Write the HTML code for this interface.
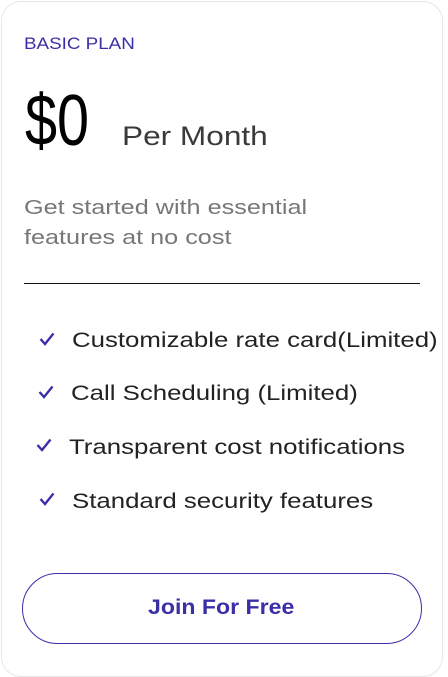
<!DOCTYPE html>
<html><head><style>
body{margin:0;width:448px;height:677px;background:#fff;font-family:"Liberation Sans",sans-serif;position:relative;overflow:hidden}
.card{position:absolute;left:1px;top:1px;width:440px;height:674px;border:1px solid #e6e6e6;border-radius:20px}
.a{position:absolute;white-space:nowrap;transform-origin:left center}
.f{font-size:21.5px;color:#222;transform:scaleX(1.2)}
.ck{position:absolute;width:16px;height:14px}
</style></head><body>
<div class="card"></div>
<div class="a" style="left:24px;top:35px;font-size:16.5px;color:#3a2fa6;transform:scaleX(1.14)">BASIC PLAN</div>
<div class="a" style="left:25px;top:80px;font-size:72px;color:#000;transform:scaleX(0.8)">$0</div>
<div class="a" style="left:122px;top:121px;font-size:27px;color:#3a3a3a;transform:scaleX(1.17)">Per Month</div>
<div class="a" style="left:24px;top:193px;font-size:20.5px;color:#777;line-height:30px;transform:scaleX(1.23);transform-origin:left top">Get started with essential<br>features at no cost</div>
<div class="a" style="left:24px;top:283px;width:396px;height:1px;background:#111"></div>
<svg class="ck" style="left:39px;top:332px" viewBox="0 0 16 14"><path d="M1.5 7l4.5 5 8.5-10.5" fill="none" stroke="#3a2fa6" stroke-width="2.4"/></svg>
<div class="a f" style="left:72px;top:328px">Customizable rate card(Limited)</div>
<svg class="ck" style="left:38px;top:385px" viewBox="0 0 16 14"><path d="M1.5 7l4.5 5 8.5-10.5" fill="none" stroke="#3a2fa6" stroke-width="2.4"/></svg>
<div class="a f" style="left:71px;top:381px">Call Scheduling (Limited)</div>
<svg class="ck" style="left:36px;top:438px" viewBox="0 0 16 14"><path d="M1.5 7l4.5 5 8.5-10.5" fill="none" stroke="#3a2fa6" stroke-width="2.4"/></svg>
<div class="a f" style="left:69px;top:435px">Transparent cost notifications</div>
<svg class="ck" style="left:39px;top:492px" viewBox="0 0 16 14"><path d="M1.5 7l4.5 5 8.5-10.5" fill="none" stroke="#3a2fa6" stroke-width="2.4"/></svg>
<div class="a f" style="left:72px;top:489px">Standard security features</div>
<div class="a" style="left:22px;top:573px;width:398px;height:69px;border:1px solid #3a2fa6;border-radius:36px"></div>
<div class="a" style="left:148px;top:596px;font-size:21px;font-weight:bold;color:#3a2fa6;transform:scaleX(1.1)">Join For Free</div>
</body></html>
